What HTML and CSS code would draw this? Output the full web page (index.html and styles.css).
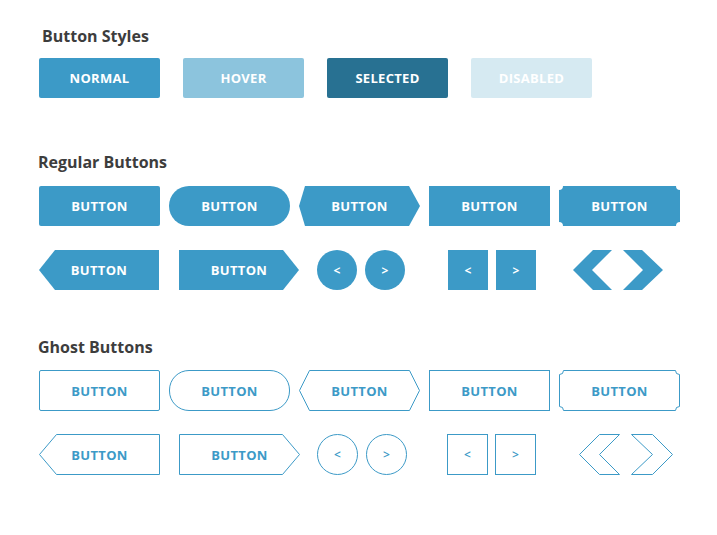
FILE: index.html
```html
<!DOCTYPE html>
<html>
<head>
	<title>Button Styles</title>
	<link rel="stylesheet" href="styles.css">
</head>
<body>
	<div class="page">
		<section class="group">
			<h2 class="title title-first">Button Styles</h2>
			<div class="states">
				<div class="btn">NORMAL</div>
				<div class="btn btn-hover">HOVER</div>
				<div class="btn btn-selected">SELECTED</div>
				<div class="btn btn-disabled">DISABLED</div>
			</div>
		</section>

		<section class="group group-regular">
			<h2 class="title">Regular Buttons</h2>
			<div class="grid">
				<div class="btn">BUTTON</div>
				<div class="btn btn-pill">BUTTON</div>
				<div class="btn btn-shape">
					<svg viewBox="0 0 121 40"><polygon points="6,0 110,0 121,20 110,40 6,40 0,20" /></svg>
					<span>BUTTON</span>
				</div>
				<div class="btn btn-square">BUTTON</div>
				<div class="btn btn-shape">
					<svg viewBox="0 0 121 40"><path d="M4,0 H117 A4,4 0 0 0 121,4 V36 A4,4 0 0 0 117,40 H4 A4,4 0 0 0 0,36 V4 A4,4 0 0 0 4,0 Z" /></svg>
					<span>BUTTON</span>
				</div>

				<div class="btn btn-shape btn-arrow">
					<svg viewBox="0 0 120 40"><polygon points="16,0 120,0 120,40 16,40 0,20" /></svg>
					<span>BUTTON</span>
				</div>
				<div class="btn btn-shape btn-arrow btn-push">
					<svg viewBox="0 0 120 40"><polygon points="0,0 104,0 120,20 104,40 0,40" /></svg>
					<span>BUTTON</span>
				</div>
				<div class="pair pair-round">
					<div class="btn btn-round">&lt;</div>
					<div class="btn btn-round">&gt;</div>
				</div>
				<div class="pair pair-box">
					<div class="btn btn-box">&lt;</div>
					<div class="btn btn-box">&gt;</div>
				</div>
				<div class="pair pair-chevron">
					<svg class="chevron" viewBox="0 0 41 40"><polygon points="21,0 40,0 20,20 40,40 21,40 1,20" /></svg>
					<svg class="chevron" viewBox="0 0 41 40"><polygon points="0,0 19,0 40,20 19,40 0,40 20,20" /></svg>
				</div>
			</div>
		</section>

		<section class="group group-ghost">
			<h2 class="title">Ghost Buttons</h2>
			<div class="grid ghosts">
				<div class="btn ghost">BUTTON</div>
				<div class="btn ghost btn-pill">BUTTON</div>
				<div class="btn ghost btn-shape">
					<svg viewBox="0 0 121 41"><polygon points="10.5,0.5 110.5,0.5 120.5,20.5 110.5,40.5 10.5,40.5 0.5,20.5" /></svg>
					<span>BUTTON</span>
				</div>
				<div class="btn ghost btn-square">BUTTON</div>
				<div class="btn ghost btn-shape">
					<svg viewBox="0 0 121 41"><path d="M4.5,0.5 H116.5 A4,4 0 0 0 120.5,4.5 V36.5 A4,4 0 0 0 116.5,40.5 H4.5 A4,4 0 0 0 0.5,36.5 V4.5 A4,4 0 0 0 4.5,0.5 Z" /></svg>
					<span>BUTTON</span>
				</div>

				<div class="btn ghost btn-shape btn-arrow">
					<svg viewBox="0 0 121 41"><polygon points="17.5,0.5 120.5,0.5 120.5,40.5 17.5,40.5 0.5,20.5" /></svg>
					<span>BUTTON</span>
				</div>
				<div class="btn ghost btn-shape btn-arrow btn-push">
					<svg viewBox="0 0 121 41"><polygon points="0.5,0.5 103.5,0.5 120.5,20.5 103.5,40.5 0.5,40.5" /></svg>
					<span>BUTTON</span>
				</div>
				<div class="pair pair-round">
					<div class="btn ghost btn-round">&lt;</div>
					<div class="btn ghost btn-round">&gt;</div>
				</div>
				<div class="pair pair-box">
					<div class="btn ghost btn-box">&lt;</div>
					<div class="btn ghost btn-box">&gt;</div>
				</div>
				<div class="pair pair-chevron pair-ghost">
					<svg class="chevron" viewBox="0 0 41 41"><polygon points="20.5,0.5 40.5,0.5 20.5,20.5 40.5,40.5 20.5,40.5 0.5,20.5" /></svg>
					<svg class="chevron" viewBox="0 0 42 41"><polygon points="0.5,0.5 21.5,0.5 41.5,20.5 21.5,40.5 0.5,40.5 21.5,20.5" /></svg>
				</div>
			</div>
		</section>
	</div>
</body>
</html>
```

FILE: styles.css
```css
body {
	margin: 0;
	background-color: #fff;
	font-family: "Open Sans", "Liberation Sans", sans-serif;
	color: #3d3d3d;
}

.page {
	padding: 26px 0 0 39px;
}

.title {
	margin: 0 0 12px -1px;
	font-size: 16px;
	font-weight: 700;
	line-height: 20px;
	color: #3d3d3d;
}

.title-first {
	margin-left: 3px;
}

.group-regular {
	margin-top: 54px;
}

.group-regular .title {
	margin-bottom: 14px;
}

.group-ghost {
	margin-top: 47px;
}

.group-ghost .title {
	margin-bottom: 13px;
}

.states {
	display: flex;
	gap: 23px;
}

.grid {
	display: grid;
	grid-template-columns: repeat(5, 121px);
	column-gap: 9px;
	row-gap: 24px;
	align-items: center;
}

.ghosts {
	row-gap: 23px;
}

.btn {
	box-sizing: border-box;
	width: 121px;
	height: 40px;
	display: flex;
	align-items: center;
	justify-content: center;
	position: relative;
	font-size: 13px;
	font-weight: 700;
	letter-spacing: 0.3px;
	color: #fff;
	background-color: #3c9ac7;
	border-radius: 2px;
}

.btn-hover {
	background-color: #8cc4dd;
}

.btn-selected {
	background-color: #287192;
}

.btn-disabled {
	background-color: #d6eaf2;
}

.btn-pill {
	border-radius: 20px;
}

.btn-square {
	border-radius: 0;
}

.btn-shape {
	background: none;
}

.btn-shape svg {
	position: absolute;
	top: 0;
	left: 0;
	width: 100%;
	height: 100%;
	fill: #3c9ac7;
}

.btn-shape span {
	position: relative;
}

.btn-arrow {
	width: 120px;
}

.btn-push {
	margin-left: 10px;
}

.pair {
	display: flex;
	gap: 8px;
}

.pair-round {
	margin-left: 18px;
}

.pair-box {
	margin-left: 19px;
}

.btn-round {
	width: 40px;
	border-radius: 50%;
	font-size: 12px;
}

.btn-box {
	width: 40px;
	border-radius: 0;
	font-size: 12px;
}

.pair-chevron {
	gap: 0;
	margin-left: 13px;
}

.chevron {
	width: 41px;
	height: 40px;
	fill: #3c9ac7;
}

.pair-chevron .chevron + .chevron {
	margin-left: 10px;
}

/* ghost variants */

.ghosts .btn {
	height: 41px;
}

.ghost {
	background-color: #fff;
	border: 1px solid #3c9ac7;
	color: #3c9ac7;
}

.ghost.btn-shape {
	border: none;
	background: none;
}

.ghost.btn-shape svg {
	fill: #fff;
	stroke: #3c9ac7;
	stroke-width: 1;
}

.ghost.btn-round,
.ghost.btn-box {
	width: 41px;
	font-weight: 600;
}

.ghost.btn-arrow {
	width: 121px;
}

.ghosts .pair-box {
	margin-left: 18px;
	gap: 7px;
}

.pair-ghost {
	margin-left: 20px;
}

.pair-ghost .chevron {
	height: 41px;
	fill: none;
	stroke: #3c9ac7;
	stroke-width: 1;
}

.pair-ghost .chevron + .chevron {
	width: 42px;
	margin-left: 11px;
}
```
